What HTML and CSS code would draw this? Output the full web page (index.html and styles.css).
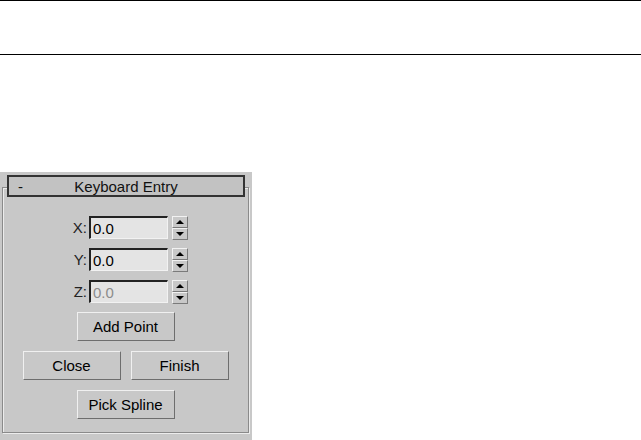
FILE: index.html
```html
<!DOCTYPE html>
<html lang="en">
<head>
    <meta charset="UTF-8">
    <title>Keyboard Entry</title>
    <link rel="stylesheet" href="styles.css">
</head>
<body>
    <div class="rules"></div>

    <div class="panel">
        <div class="rollout-head">
            <span class="toggle">-</span>
            <span class="title">Keyboard Entry</span>
        </div>
        <div class="rollout-body">
            <div class="field-row">
                <label for="x">X:</label>
                <input type="text" id="x" value="0.0">
                <div class="spinner"><span class="up"></span><span class="down"></span></div>
            </div>
            <div class="field-row">
                <label for="y">Y:</label>
                <input type="text" id="y" value="0.0">
                <div class="spinner"><span class="up"></span><span class="down"></span></div>
            </div>
            <div class="field-row">
                <label for="z">Z:</label>
                <input type="text" id="z" value="0.0" disabled>
                <div class="spinner"><span class="up"></span><span class="down"></span></div>
            </div>
            <div class="btn-row">
                <button>Add Point</button>
            </div>
            <div class="btn-row">
                <button>Close</button>
                <button>Finish</button>
            </div>
            <div class="btn-row">
                <button>Pick Spline</button>
            </div>
        </div>
    </div>
</body>
</html>
```

FILE: styles.css
```css
body {
    margin: 0;
    background: #fff;
    font-family: "Liberation Sans", Arial, sans-serif;
    font-size: 15px;
    color: #111;
}
.rules {
    height: 53px;
    border-top: 1px solid #000;
    border-bottom: 1px solid #000;
}
.panel {
    margin-top: 117px;
    width: 252px;
    height: 268px;
    padding-top: 3px;
    box-sizing: border-box;
    background: #c8c8c8;
}
.rollout-head {
    position: relative;
    z-index: 1;
    display: flex;
    align-items: center;
    height: 22px;
    margin: 0 7px 0 7px;
    box-sizing: border-box;
    border: 2px solid #333;
    background: #c2c2c2;
    padding-right: 20px;
}
.rollout-head .toggle {
    width: 20px;
    padding-left: 9px;
    box-sizing: border-box;
}
.rollout-head .title {
    flex: 1;
    text-align: center;
}
.rollout-body {
    margin: -10px 3px 0 2px;
    height: 246px;
    box-sizing: border-box;
    padding-top: 28px;
    border: 1px solid #8a8a8a;
    box-shadow: inset 1px 1px 0 #ececec, 1px 1px 0 #ececec;
}
.field-row {
    display: flex;
    align-items: center;
    padding-left: 56px;
    height: 23px;
    margin-bottom: 9px;
}
.field-row label {
    width: 28px;
    text-align: right;
    margin-right: 2px;
    color: #222;
}
.field-row input {
    width: 79px;
    height: 23px;
    box-sizing: border-box;
    margin: 0;
    padding: 0 2px;
    font: inherit;
    color: #000;
    background: #e4e4e4;
    border-style: solid;
    border-width: 2px 1px 1px 2px;
    border-color: #222 #f2f2f2 #f2f2f2 #222;
}
.field-row input:disabled {
    color: #8c8c8c;
}
.spinner {
    display: flex;
    flex-direction: column;
    width: 16px;
    height: 24px;
    margin-left: 4px;
}
.spinner span {
    flex: 1;
    display: flex;
    align-items: center;
    justify-content: center;
    border-style: solid;
    border-width: 1px;
    border-color: #f2f2f2 #7a7a7a #7a7a7a #f2f2f2;
}
.spinner .up::after {
    content: "";
    border-left: 4px solid transparent;
    border-right: 4px solid transparent;
    border-bottom: 4px solid #000;
}
.spinner .down::after {
    content: "";
    border-left: 4px solid transparent;
    border-right: 4px solid transparent;
    border-top: 4px solid #000;
}
.btn-row {
    display: flex;
    justify-content: center;
    gap: 10px;
    margin-bottom: 10px;
}
.btn-row button {
    width: 98px;
    height: 29px;
    margin: 0;
    padding: 0;
    font: inherit;
    color: #000;
    background: #c8c8c8;
    border-style: solid;
    border-width: 1px;
    border-color: #f0f0f0 #6e6e6e #6e6e6e #f0f0f0;
}
```
